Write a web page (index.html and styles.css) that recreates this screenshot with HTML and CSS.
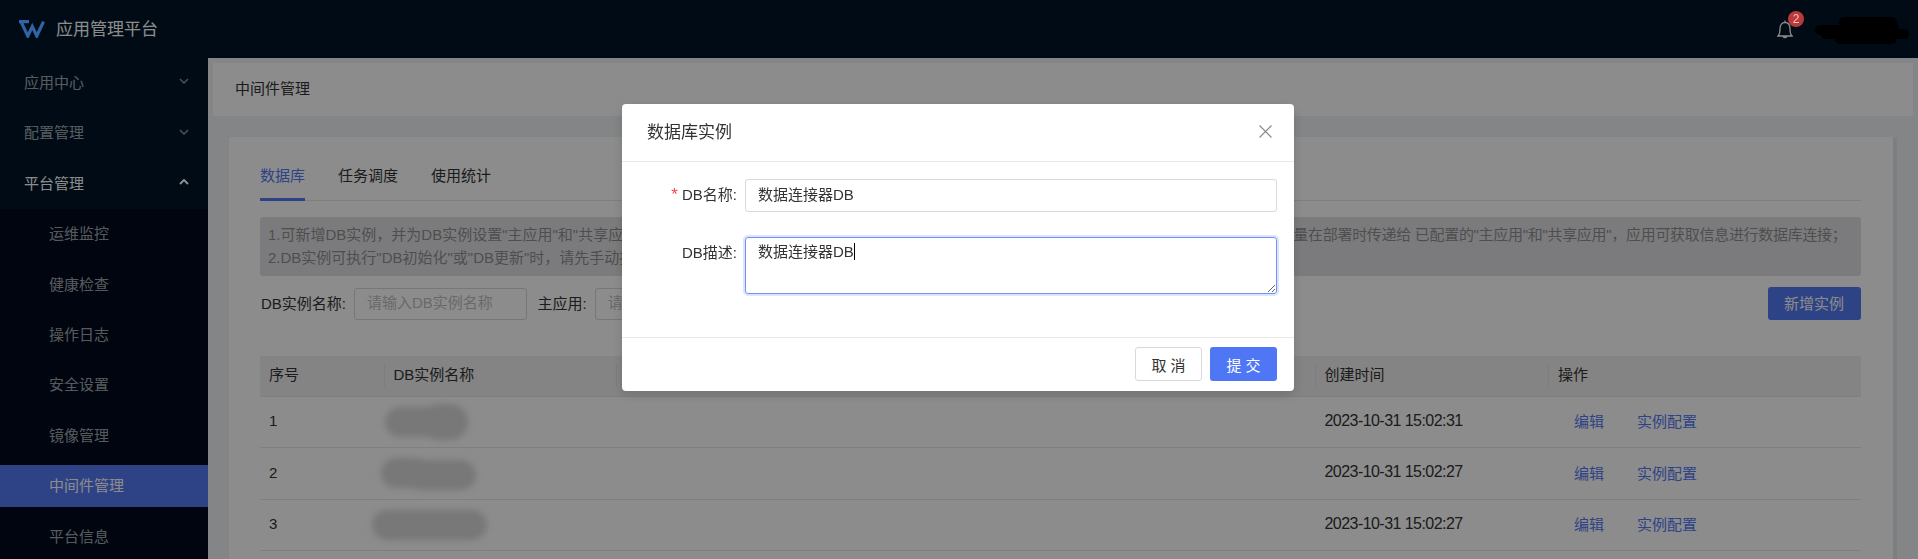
FILE: index.html
```html
<!DOCTYPE html>
<html lang="zh-CN">
<head>
<meta charset="utf-8">
<title>应用管理平台</title>
<link rel="stylesheet" href="styles.css">
</head>
<body>
<div class="app">
  <header class="topbar">
    <svg class="logo" viewBox="0 0 26 18" aria-hidden="true"><path d="M0 1.600H10M2 1.600L8.800 16L13.300 6.500L17.800 16L24.500 1.600"/></svg>
    <span class="brand">应用管理平台</span>
    <div class="bell">
      <svg class="bell-icon" viewBox="0 0 16 21" aria-hidden="true"><path d="M1 17c1.600-1.600 2-3.500 2-7c0-4 2-6.500 5-6.500s5 2.500 5 6.500c0 3.500 .4 5.400 2 7zM8 3.500V1.500M6.300 17.500a1.800 1.800 0 0 0 3.400 0"/></svg>
      <span class="badge">2</span>
    </div>
    <svg class="scribble" viewBox="0 0 97 30" aria-hidden="true"><path d="M6 16H24M30 8H78M30 14H80M12 20H90M26 25H78"/></svg>
  </header>
  <div class="body">
    <aside class="sidebar">
      <div class="menu-item">应用中心<svg class="chev" viewBox="0 0 10 6"><path d="M1 1l4 4l4-4"/></svg></div>
      <div class="menu-item">配置管理<svg class="chev" viewBox="0 0 10 6"><path d="M1 1l4 4l4-4"/></svg></div>
      <div class="menu-item open">平台管理<svg class="chev up" viewBox="0 0 10 6"><path d="M1 5l4-4l4 4"/></svg></div>
      <div class="submenu">
        <div class="sub-item">运维监控</div>
        <div class="sub-item">健康检查</div>
        <div class="sub-item">操作日志</div>
        <div class="sub-item">安全设置</div>
        <div class="sub-item">镜像管理</div>
        <div class="sub-item active">中间件管理</div>
        <div class="sub-item">平台信息</div>
      </div>
    </aside>
    <main class="main">
      <div class="crumb">中间件管理</div>
      <div class="card-wrap">
        <section class="card">
          <nav class="tabs">
            <span class="tab active">数据库</span>
            <span class="tab">任务调度</span>
            <span class="tab">使用统计</span>
          </nav>
          <div class="alert">
            <div class="alert-line"><span>1.可新增DB实例，并为DB实例设置"主应用"和"共享应</span><span class="tail">量在部署时传递给 已配置的"主应用"和"共享应用"，应用可获取信息进行数据库连接；</span></div>
            <div class="alert-line"><span>2.DB实例可执行"DB初始化"或"DB更新"时，请先手动按</span></div>
          </div>
          <div class="filters">
            <label class="f-label">DB实例名称:</label>
            <input class="f-input" placeholder="请输入DB实例名称">
            <label class="f-label second">主应用:</label>
            <input class="f-input" placeholder="请">
            <button class="add-btn">新增实例</button>
          </div>
          <table class="grid">
            <colgroup><col class="c1"><col class="c2"><col class="c3"><col class="c4"><col class="c5"></colgroup>
            <thead>
              <tr><th>序号</th><th>DB实例名称</th><th></th><th>创建时间</th><th>操作</th></tr>
            </thead>
            <tbody>
              <tr><td>1</td><td class="blur-cell"><span class="blob b1"></span></td><td></td><td class="date">2023-10-31 15:02:31</td><td class="ops"><a>编辑</a><a>实例配置</a></td></tr>
              <tr><td>2</td><td class="blur-cell"><span class="blob b2"></span></td><td></td><td class="date">2023-10-31 15:02:27</td><td class="ops"><a>编辑</a><a>实例配置</a></td></tr>
              <tr><td>3</td><td class="blur-cell"><span class="blob b3"></span></td><td></td><td class="date">2023-10-31 15:02:27</td><td class="ops"><a>编辑</a><a>实例配置</a></td></tr>
            </tbody>
          </table>
        </section>
        <div class="scroll-strip"></div>
      </div>
    </main>
  </div>
</div>
<div class="mask"></div>
<div class="modal">
  <div class="modal-head">
    <span class="modal-title">数据库实例</span>
    <svg class="close" viewBox="0 0 13 13" aria-hidden="true"><path d="M.5 .5l12 12M12.500 .5l-12 12"/></svg>
  </div>
  <div class="modal-body">
    <div class="form-row">
      <label class="form-label"><span class="req">*</span>DB名称:</label>
      <div class="field">数据连接器DB</div>
    </div>
    <div class="form-row">
      <label class="form-label">DB描述:</label>
      <div class="field area">数据连接器DB<span class="caret"></span></div>
    </div>
  </div>
  <div class="modal-foot">
    <button class="btn">取 消</button>
    <button class="btn primary">提 交</button>
  </div>
</div>
</body>
</html>
```

FILE: styles.css
```css
* { box-sizing: border-box; }
html, body { margin: 0; height: 559px; overflow: hidden; }
body {
  font-family: "Liberation Sans", "Noto Sans CJK SC", sans-serif;
  font-size: 15px;
  color: #333;
  background: #f0f2f5;
}
.app { display: flex; flex-direction: column; height: 559px; }

.topbar {
  height: 58px;
  flex: none;
  display: flex;
  align-items: center;
  padding: 0 7px 0 19px;
  background: #001529;
}
.logo { width: 26px; height: 18px; fill: none; stroke: #2f64a6; stroke-width: 3.200; position: relative; z-index: 1001; }
.brand { margin-left: 11px; padding-bottom: 4px; font-size: 17px; color: #fff; }
.bell { position: relative; margin-left: auto; width: 16px; height: 21px; }
.bell-icon { display: block; width: 16px; height: 21px; fill: none; stroke: #fff; stroke-width: 1.300; }
.badge {
  position: absolute;
  left: 11px;
  top: -8px;
  z-index: 1001;
  width: 16px;
  height: 16px;
  border-radius: 50%;
  background: #bb383b;
  color: #eec4c4;
  font-size: 12px;
  line-height: 16px;
  text-align: center;
}
.scribble { width: 97px; height: 30px; margin-left: 21px; fill: none; stroke: #000; stroke-width: 10; stroke-linecap: round; position: relative; z-index: 1001; }

.body { flex: 1; min-height: 0; display: flex; }
.sidebar { width: 208px; flex: none; display: flex; flex-direction: column; background: #001529; color: rgba(255, 255, 255, .65); overflow: hidden; }
.menu-item {
  height: 42px;
  flex: none;
  margin: 3.400px 0 5px;
  padding: 0 19.500px 2px 24px;
  display: flex;
  align-items: center;
  justify-content: space-between;
}
.menu-item.open { color: #fff; }
.chev { width: 10px; height: 6px; fill: none; stroke: currentColor; stroke-width: 1.600; opacity: .8; }
.chev.up { stroke-width: 2; opacity: 1; }
.submenu { flex: 1; padding-top: 3.600px; background: #000a1c; }
.sub-item { height: 42px; margin-bottom: 8.400px; padding: 0 0 2px 49px; display: flex; align-items: center; }
.sub-item.active { background: #5578f5; color: #fff; }

.main { flex: 1; min-width: 0; padding: 5px 5px 0; display: flex; flex-direction: column; }
.crumb { height: 53px; flex: none; padding: 0 0 4px 22px; display: flex; align-items: center; background: #fff; }
.card-wrap { flex: 1; margin: 21px 16px 0; display: flex; }
.card { flex: 1; min-width: 0; background: #fff; padding: 28px 32px 0 31px; }
.scroll-strip { width: 4.500px; background: #e5e6e9; border-radius: 2px 2px 0 0; }

.tabs { display: flex; gap: 33px; border-bottom: 1px solid #e8e8e8; }
.tab { position: relative; line-height: 22px; padding-bottom: 13px; }
.tab.active { color: #5578f5; }
.tab.active::after { content: ""; position: absolute; left: 0; right: 0; bottom: -1px; height: 3px; background: #5578f5; }

.alert {
  margin-top: 16px;
  height: 59px;
  padding: 5.500px 14px 0 8px;
  line-height: 23px;
  white-space: nowrap;
  overflow: hidden;
  background: #e0e1e3;
  color: #8f8f8f;
  border-radius: 3px;
}
.alert-line { display: flex; justify-content: space-between; }
.tail { letter-spacing: -.3px; }

.filters { margin-top: 11px; height: 33px; display: flex; align-items: center; }
.f-label { margin-right: 8px; padding: 0 0 2px 1px; white-space: nowrap; }
.f-label.second { margin-left: 10px; }
.f-input {
  width: 172.500px;
  height: 32px;
  padding: 0 12px 2px;
  border: 1px solid #d9d9d9;
  border-radius: 3px;
  font: inherit;
  color: #333;
  background: #fff;
  outline: none;
}
.f-input::placeholder { color: #bfbfbf; }
.add-btn {
  margin-left: auto;
  width: 93px;
  height: 33px;
  padding: 0 0 2px;
  border: 0;
  border-radius: 3px;
  background: #5578f5;
  color: #fff;
  font: inherit;
}

.grid { margin-top: 36px; width: 100%; table-layout: fixed; border-collapse: collapse; }
.c1 { width: 124.500px; }
.c2 { width: 232.500px; }
.c3 { width: 698.500px; }
.c4 { width: 233.500px; }
th {
  position: relative;
  height: 40px;
  padding: 0 0 5px 9px;
  background: #f0f0f0;
  font-weight: 400;
  text-align: left;
  border-bottom: 1px solid #e8e8e8;
}
th:not(:last-child)::after {
  content: "";
  position: absolute;
  right: 0;
  top: 8px;
  width: 1px;
  height: 23px;
  background: #e4e4e4;
}
td { height: 51.500px; padding: 0 0 2px 9px; border-bottom: 1px solid #e8e8e8; }
.date { font-size: 16px; letter-spacing: -.55px; }
.ops a { color: #5578f5; margin-left: 16px; }
.ops a + a { margin-left: 33px; }
.blur-cell { padding: 0; }
.blob { display: block; position: relative; background: #dadada; border-radius: 16px; filter: blur(3px); }
.b1 { width: 66px; height: 30px; }
.b1::after { content: ""; position: absolute; left: 36px; top: -3px; width: 47px; height: 36px; border-radius: 18px; background: #dadada; }
.b2 { width: 50px; height: 30px; margin-left: -4px; }
.b2::after { content: ""; position: absolute; left: 25px; top: 2px; width: 70px; height: 30px; border-radius: 15px; background: #dadada; }
.b3 { width: 115px; height: 30px; margin-left: -13px; }

.mask { position: fixed; inset: 0; z-index: 1000; background: rgba(0, 0, 0, .45); }
.modal {
  position: fixed;
  left: 622px;
  top: 104px;
  z-index: 1001;
  width: 672px;
  height: 287px;
  display: flex;
  flex-direction: column;
  background: #fff;
  border-radius: 4px;
  box-shadow: 0 4px 12px rgba(0, 0, 0, .15);
}
.modal-head {
  height: 58px;
  flex: none;
  padding: 0 22px 0 25px;
  display: flex;
  align-items: center;
  justify-content: space-between;
  border-bottom: 1px solid #e8e8e8;
}
.modal-title { font-size: 17px; line-height: 1; }
.close { width: 13px; height: 13px; margin-top: -3px; fill: none; stroke: #888; stroke-width: 1.100; }
.modal-body { flex: 1; padding: 17px 17px 0 0; display: flex; flex-direction: column; gap: 25px; }
.form-row { display: flex; gap: 8px; }
.form-label { width: 115px; flex: none; text-align: right; line-height: 31px; }
.req { color: #f5454a; margin-right: 4px; font-size: 17px; line-height: 0; }
.field {
  flex: 1;
  height: 33px;
  padding: 0 12px;
  border: 1px solid #d9d9d9;
  border-radius: 3px;
  line-height: 29px;
}
.field.area {
  height: 57px;
  padding-top: 3px;
  line-height: 22px;
  border-color: #6f93ee;
  box-shadow: 0 0 0 2px rgba(85, 120, 245, .2);
  resize: vertical;
  overflow: auto;
}
.caret { display: inline-block; width: 1px; height: 17px; background: #000; vertical-align: -3px; }
.modal-foot {
  height: 54px;
  flex: none;
  padding: 9px 17px 0 0;
  display: flex;
  justify-content: flex-end;
  gap: 8px;
  border-top: 1px solid #e8e8e8;
}
.btn {
  width: 67px;
  height: 34px;
  border: 1px solid #d9d9d9;
  border-radius: 3px;
  background: #fff;
  color: #333;
  font: inherit;
}
.btn.primary { border: 0; background: #4f77f5; color: #fff; }
```
